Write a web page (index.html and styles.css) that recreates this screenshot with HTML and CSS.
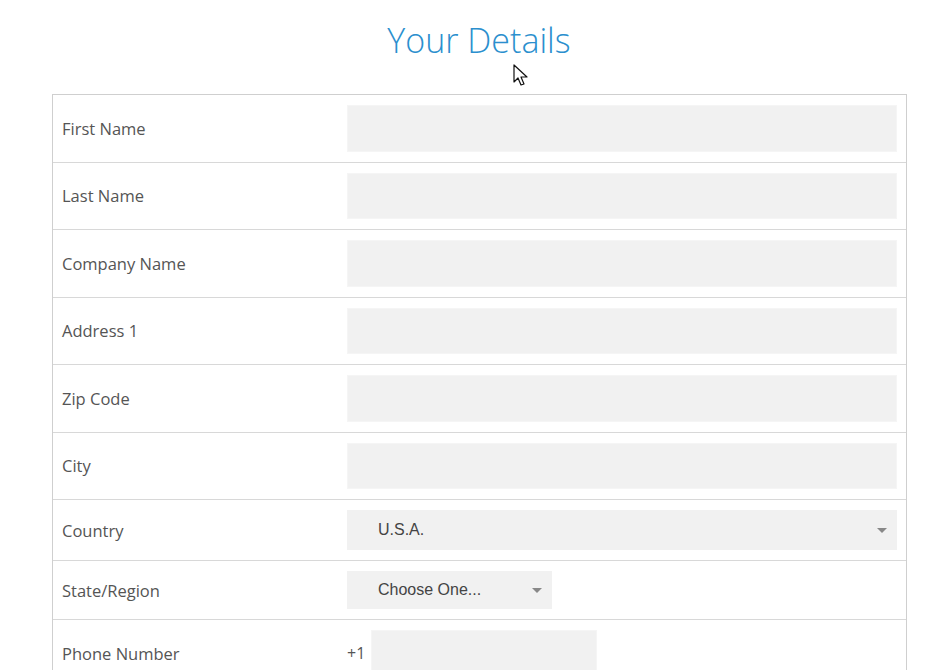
FILE: index.html
```html
<!DOCTYPE html>
<html>
    <head>
        <title>Your Details</title>
        <link rel="stylesheet" href="styles.css">
    </head>
    <body>
        <h1 class="title">Your Details</h1>
        <div class="form">
            <div class="row">
                <label class="label">First Name</label>
                <div class="field"><input class="text" type="text"></div>
            </div>
            <div class="row">
                <label class="label">Last Name</label>
                <div class="field"><input class="text" type="text"></div>
            </div>
            <div class="row">
                <label class="label">Company Name</label>
                <div class="field"><input class="text" type="text"></div>
            </div>
            <div class="row">
                <label class="label">Address 1</label>
                <div class="field"><input class="text" type="text"></div>
            </div>
            <div class="row">
                <label class="label">Zip Code</label>
                <div class="field"><input class="text" type="text"></div>
            </div>
            <div class="row">
                <label class="label">City</label>
                <div class="field"><input class="text" type="text"></div>
            </div>
            <div class="row">
                <label class="label">Country</label>
                <div class="field">
                    <div class="select wide"><span>U.S.A.</span><i class="arrow"></i></div>
                </div>
            </div>
            <div class="row">
                <label class="label">State/Region</label>
                <div class="field">
                    <div class="select short"><span>Choose One...</span><i class="arrow"></i></div>
                </div>
            </div>
            <div class="row">
                <label class="label">Phone Number</label>
                <div class="field phone">
                    <span class="prefix">+1</span>
                    <input class="text tel" type="text">
                </div>
            </div>
        </div>
        <!-- mouse pointer -->
        <svg class="pointer" width="16" height="24" viewBox="0 0 16 24">
            <path d="M1 1 L1 18 L5 14 L8 21 L11 20 L8 13 L14 13 Z" fill="#fff" stroke="#111" stroke-width="1.2" stroke-linejoin="round"/>
        </svg>
    </body>
</html>
```

FILE: styles.css
```css
body {
    margin: 0;
    background-color: #fff;
    font-family: "Open Sans", sans-serif;
    position: relative;
}
.title {
    width: 854px;
    margin: 0 0 0 52px;
    padding-top: 19px;
    height: 94px;
    box-sizing: border-box;
    text-align: center;
    font-size: 34px;
    font-weight: 300;
    color: #2b8fce;
    line-height: 42px;
}
.form {
    width: 855px;
    box-sizing: border-box;
    margin-left: 52px;
    border: 1px solid #cfcfcf;
    border-bottom: none;
}
.row {
    display: flex;
    align-items: center;
    border-bottom: 1px solid #d8d8d8;
}
.label {
    width: 285px;
    padding-left: 9px;
    font-size: 16.5px;
    color: #555;
}
.field {
    flex: 1;
    display: flex;
    align-items: center;
    padding: 10px 9px 10px 0;
}
.text {
    width: 100%;
    height: 46.5px;
    box-sizing: border-box;
    border: 1px solid #f5f5f5;
    background-color: #f1f1f1;
    outline: none;
}
.select {
    height: 38px;
    box-sizing: border-box;
    background-color: #f1f1f1;
    display: flex;
    align-items: center;
    justify-content: space-between;
    padding: 0 10px 0 31px;
    font-family: "Liberation Sans", Arial, sans-serif;
    font-size: 16px;
    color: #444;
}
.wide {
    width: 100%;
    height: 40px;
}
.short {
    width: 205px;
}
.arrow {
    width: 0;
    height: 0;
    border-left: 5px solid transparent;
    border-right: 5px solid transparent;
    border-top: 5px solid #888;
}
.phone {
    gap: 6px;
}
.prefix {
    font-size: 16px;
    color: #555;
}
.tel {
    width: 226px;
}
.pointer {
    position: absolute;
    left: 513px;
    top: 64px;
}
```
